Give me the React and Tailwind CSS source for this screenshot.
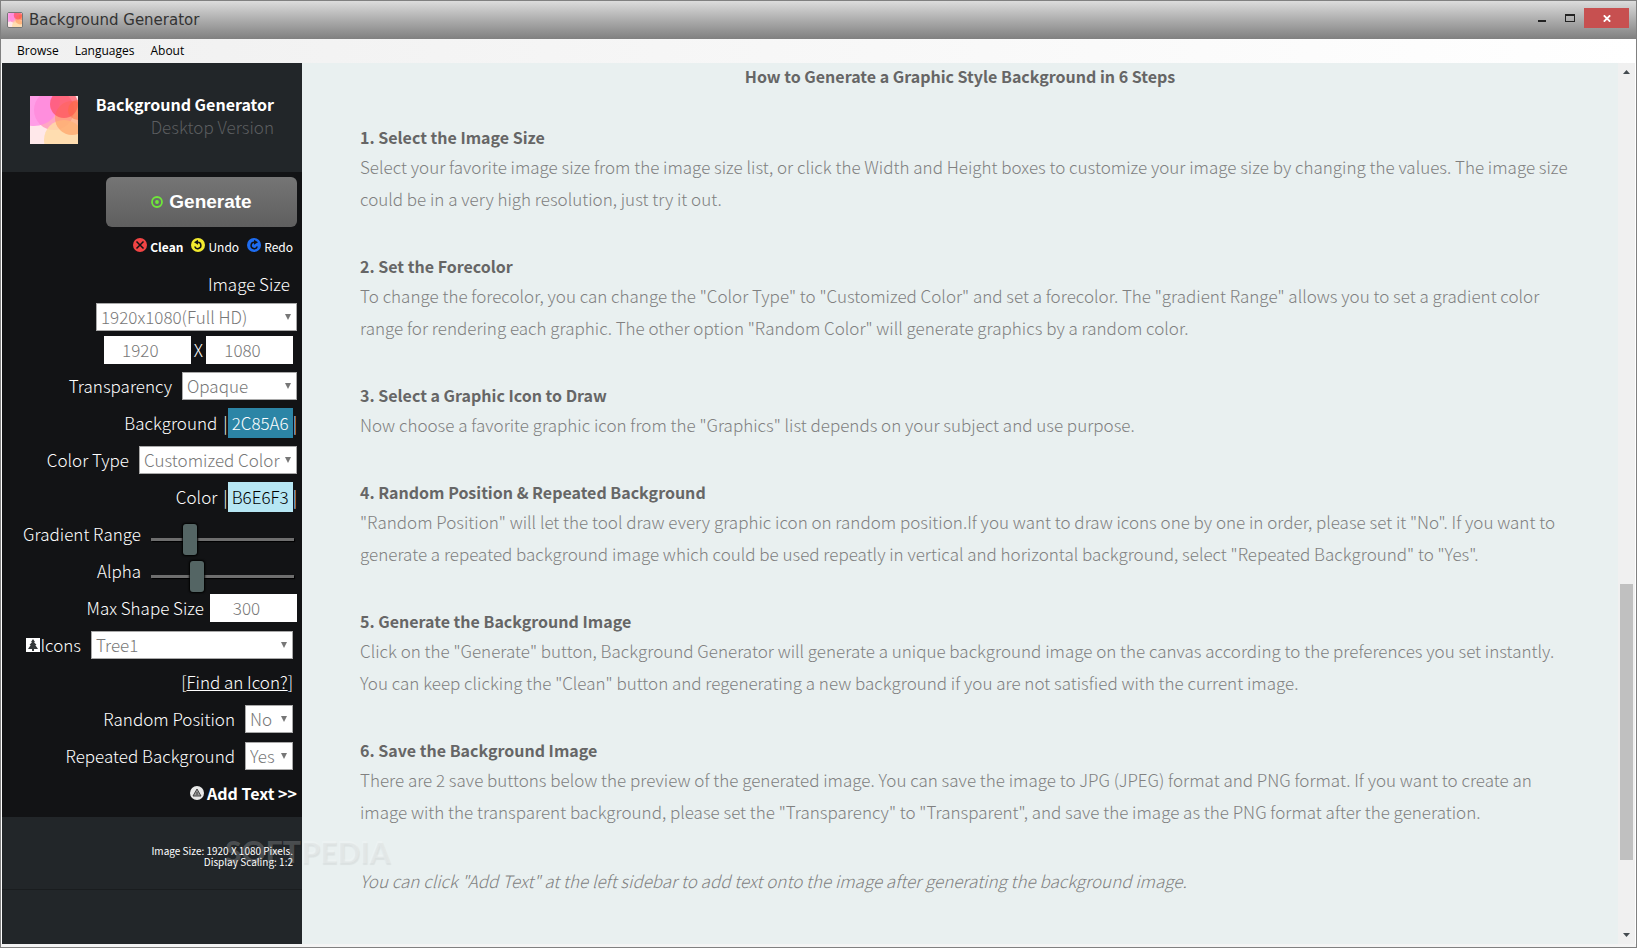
const SOURCE = "font-['Noto_Sans_CJK_SC','Source_Sans_Pro',sans-serif]";

const steps = [
  {
    title: "1. Select the Image Size",
    text: "Select your favorite image size from the image size list, or click the Width and Height boxes to customize your image size by changing the values. The image size could be in a very high resolution, just try it out.",
  },
  {
    title: "2. Set the Forecolor",
    text: 'To change the forecolor, you can change the "Color Type" to "Customized Color" and set a forecolor. The "gradient Range" allows you to set a gradient color range for rendering each graphic. The other option "Random Color" will generate graphics by a random color.',
  },
  {
    title: "3. Select a Graphic Icon to Draw",
    text: 'Now choose a favorite graphic icon from the "Graphics" list depends on your subject and use purpose.',
  },
  {
    title: "4. Random Position & Repeated Background",
    text: '"Random Position" will let the tool draw every graphic icon on random position.If you want to draw icons one by one in order, please set it "No". If you want to generate a repeated background image which could be used repeatly in vertical and horizontal background, select "Repeated Background" to "Yes".',
  },
  {
    title: "5. Generate the Background Image",
    text: 'Click on the "Generate" button, Background Generator will generate a unique background image on the canvas according to the preferences you set instantly. You can keep clicking the "Clean" button and regenerating a new background if you are not satisfied with the current image.',
  },
  {
    title: "6. Save the Background Image",
    text: 'There are 2 save buttons below the preview of the generated image. You can save the image to JPG (JPEG) format and PNG format. If you want to create an image with the transparent background, please set the "Transparency" to "Transparent", and save the image as the PNG format after the generation.',
  },
];

function Logo({ className }) {
  return (
    <svg viewBox="0 0 48 48" className={className} aria-hidden="true">
      <rect width="48" height="48" fill="#ffe8ea" />
      <circle cx="24" cy="14" r="20" fill="#ff7aa8" fillOpacity=".6" />
      <circle cx="4" cy="4" r="26" fill="#ff86e6" fillOpacity=".75" />
      <circle cx="34" cy="44" r="20" fill="#ffdba6" fillOpacity=".85" />
      <circle cx="42" cy="22" r="17" fill="#ff9a5c" fillOpacity=".6" />
      <circle cx="34" cy="8" r="14" fill="#ff4f5e" fillOpacity=".7" />
      <circle cx="48" cy="14" r="10" fill="#ff6a3c" fillOpacity=".5" />
    </svg>
  );
}

function TitleBar() {
  return (
    <header className="flex h-[38px] items-center bg-linear-to-b from-[#dcdcdc] to-[#808080] pr-[7px] pl-[6px]">
      <Logo className="size-4 rounded-xs border border-[#777]" />
      <h1 className="ml-[6px] flex-1 font-['DejaVu_Sans',sans-serif] text-[15px] text-[#333]">Background Generator</h1>
      <div className="mb-1 flex">
        <button aria-label="Minimize" className="flex h-5 w-7 items-center justify-center">
          <svg viewBox="0 0 8 8" className="size-2" aria-hidden="true"><path d="M0 6h8v2H0z" fill="#222" /></svg>
        </button>
        <button aria-label="Maximize" className="flex h-5 w-7 items-center justify-center">
          <svg viewBox="0 0 10 8" className="h-2 w-[10px]" aria-hidden="true"><path d="M0 0h10v8H0zM1 2v5h8V2z" fill="#222" fillRule="evenodd" /></svg>
        </button>
        <button aria-label="Close" className="flex h-5 w-[45px] items-center justify-center bg-[#c75050]">
          <svg viewBox="0 0 8 7" className="h-[7px] w-2" aria-hidden="true"><path d="M.8.3l6.4 6.4M7.2.3L.8 6.7" stroke="#fff" strokeWidth="1.8" /></svg>
        </button>
      </div>
    </header>
  );
}

function MenuBar() {
  return (
    <nav className="flex h-6 items-center gap-4 bg-linear-to-r from-[#f0f0f0] to-white pl-4 font-['Open_Sans',sans-serif] text-xs text-black">
      <button>Browse</button>
      <button>Languages</button>
      <button>About</button>
    </nav>
  );
}

function Select({ id, value, className }) {
  return (
    <span className={"relative flex h-7 " + className}>
      <select id={id} defaultValue={value} className="w-full appearance-none border border-[#a9a9a9] bg-white pl-1 text-[17px] leading-6 font-light text-[#777]">
        <option>{value}</option>
      </select>
      <svg viewBox="0 0 6 6" className="pointer-events-none absolute top-[11px] right-[6px] size-[6px]" aria-hidden="true">
        <path d="M0 0h6L3 6z" fill="#777" />
      </svg>
    </span>
  );
}

function Row({ label, id, children, className = "gap-[10px] pr-[5px]" }) {
  return (
    <div className={"flex h-[37px] items-center justify-end " + className}>
      <label htmlFor={id}>{label}</label>
      {children}
    </div>
  );
}

function NumberBox({ id, value, label }) {
  return (
    <input id={id} aria-label={label} defaultValue={value} className="h-7 w-[87px] bg-white pr-[14px] text-center text-[17px] leading-7 font-light text-[#777]" />
  );
}

function ColorBox({ id, value, className }) {
  return (
    <span className="flex items-center">
      |<input id={id} defaultValue={value} className={"h-[30px] w-[65px] text-center text-[17px] font-light " + className} />|
    </span>
  );
}

function Slider({ id, value }) {
  return (
    <input
      id={id}
      type="range"
      defaultValue={value}
      className="mt-3 h-[31px] w-[143px] appearance-none bg-transparent [&::-webkit-slider-runnable-track]:h-[3px] [&::-webkit-slider-runnable-track]:bg-[#6e6e6e] [&::-webkit-slider-runnable-track]:shadow-[1px_1px_1px_#000] [&::-webkit-slider-thumb]:-mt-[14px] [&::-webkit-slider-thumb]:h-[31px] [&::-webkit-slider-thumb]:w-[14px] [&::-webkit-slider-thumb]:appearance-none [&::-webkit-slider-thumb]:rounded-[3px] [&::-webkit-slider-thumb]:bg-[#546564] [&::-webkit-slider-thumb]:shadow-[0_0_2px_1px_#000]"
    />
  );
}

function RoundIcon({ color, children }) {
  return (
    <svg viewBox="0 0 14 14" className="mb-1 size-[14px]" fill="none" stroke="#111214" strokeWidth="1.5" aria-hidden="true">
      <circle cx="7" cy="7" r="7" fill={color} stroke="none" />
      {children}
    </svg>
  );
}

function Sidebar() {
  return (
    <aside className="flex w-[300px] shrink-0 flex-col bg-[#222629] text-[17px] leading-6 font-light text-white">
      <div className="flex h-[109px] items-start justify-between px-7 pt-[29px]">
        <Logo className="mt-1 size-12" />
        <div className="text-right">
          <p className="text-base leading-6 font-bold">Background Generator</p>
          <p className="leading-[22px] text-[#5c5e60]">Desktop Version</p>
        </div>
      </div>

      <div className="bg-[#121315] pt-[5px] pb-[6px]">
        <div className="flex justify-end pr-[5px]">
          <button className="flex h-[50px] w-[191px] items-center justify-center gap-[6px] rounded-md bg-linear-to-b from-[#757575] to-[#5f5f5f] font-['Liberation_Sans',sans-serif] text-[19px] font-bold">
            <svg viewBox="0 0 12 12" className="size-3" fill="none" stroke="#6fe83a" aria-hidden="true">
              <circle cx="6" cy="6" r="5" strokeWidth="1.8" />
              <circle cx="6" cy="6" r="1.9" fill="#6fe83a" stroke="none" />
            </svg>
            Generate
          </button>
        </div>
        <div className="flex h-10 items-center justify-end gap-2 pr-[9px] text-xs font-normal">
          <button className="flex items-center gap-[3px] font-bold">
            <RoundIcon color="#f24444"><path d="M3.500 3.500l7 7M10.500 3.500l-7 7" /></RoundIcon>
            Clean
          </button>
          <button className="flex items-center gap-[3px]">
            <RoundIcon color="#f2ea2e">
              <path d="M6.500 4.200a3.200 3.200 0 1 1-2.800 4.300" />
              <path d="M3 4.200L7 1.700v5z" fill="#111214" stroke="none" />
            </RoundIcon>
            Undo
          </button>
          <button className="flex items-center gap-[3px]">
            <RoundIcon color="#1e6cf0">
              <path d="M7.500 4.200a3.200 3.200 0 1 0 2.800 4.300" />
              <path d="M11 4.200L7 1.700v5z" fill="#111214" stroke="none" />
            </RoundIcon>
            Redo
          </button>
        </div>

        <div className="flex flex-col items-end pr-[5px]">
          <label htmlFor="preset" className="flex h-9 items-center pr-[7px] pb-[2px]">Image Size</label>
          <Select id="preset" value="1920x1080(Full HD)" className="w-[201px]" />
          <div className="mt-[5px] mb-[3px] flex items-center gap-[3px] pr-1">
            <NumberBox id="width" label="Width" value="1920" />
            X
            <NumberBox id="height" label="Height" value="1080" />
          </div>
        </div>

        <Row label="Transparency" id="transparency">
          <Select id="transparency" value="Opaque" className="w-[115px]" />
        </Row>
        <Row label="Background" id="background" className="gap-[6px] pr-[5px]">
          <ColorBox id="background" value="2C85A6" className="bg-[#2c85a6] text-white" />
        </Row>
        <Row label="Color Type" id="colorType">
          <Select id="colorType" value="Customized Color" className="w-[158px]" />
        </Row>
        <Row label="Color" id="color" className="gap-[6px] pr-[5px]">
          <ColorBox id="color" value="B6E6F3" className="bg-[#b6e6f3] text-black" />
        </Row>
        <Row label="Gradient Range" id="gradient" className="gap-[10px] pr-2">
          <Slider id="gradient" value="25" />
        </Row>
        <Row label="Alpha" id="alpha" className="gap-[10px] pr-2">
          <Slider id="alpha" value="30" />
        </Row>
        <Row label="Max Shape Size" id="shapeSize" className="gap-[6px] pr-[5px]">
          <NumberBox id="shapeSize" value="300" />
        </Row>
        <Row
          id="icons"
          className="gap-[10px] pr-[9px]"
          label={
            <span className="flex items-center">
              <svg viewBox="0 0 14 14" className="size-[14px]" aria-hidden="true">
                <path d="M0 0h14v14H0z" fill="#fff" />
                <path d="M7 1l2 3H8l2.500 3H9.300l2.700 4H8v2H6v-2H2l2.700-4H3.500L6 4H5z" fill="#34383a" />
              </svg>
              Icons
            </span>
          }
        >
          <Select id="icons" value="Tree1" className="w-[202px]" />
        </Row>
        <div className="flex h-[37px] items-center justify-end pr-[9px]">
          [<a href="#find-icon" className="underline">Find an Icon?</a>]
        </div>
        <Row label="Random Position" id="randomPosition" className="gap-[10px] pr-[9px]">
          <Select id="randomPosition" value="No" className="w-12" />
        </Row>
        <Row label="Repeated Background" id="repeated" className="gap-[10px] pr-[9px]">
          <Select id="repeated" value="Yes" className="w-12" />
        </Row>
        <div className="flex h-[37px] items-center justify-end pr-[5px]">
          <button className="flex items-center gap-[3px] text-base font-bold">
            <svg viewBox="0 0 14 14" className="size-[14px]" aria-hidden="true">
              <circle cx="7" cy="7" r="7" fill="#e8e8e8" />
              <path d="M7 3l4 7H3zM7 6v3" fill="#999" stroke="#444" />
            </svg>
            Add Text &gt;&gt;
          </button>
        </div>
      </div>

      <div className="h-[73px] border-b border-[#1a1d1f] pt-7 pr-[9px] text-right text-[10px] leading-[11px] font-normal">
        <p>Image Size: 1920 X 1080 Pixels.</p>
        <p>Display Scaling: 1:2</p>
      </div>
    </aside>
  );
}

function Guide() {
  return (
    <main className="flex-1 bg-[#e9f0f0] px-10 text-[17px] font-light text-[#808080]">
      <h2 className="mb-[34px] text-center text-base leading-[26px] font-bold text-[#666]">How to Generate a Graphic Style Background in 6 Steps</h2>
      {steps.map((step) => (
        <section key={step.title} className="mb-[37px] pl-[18px]">
          <h3 className="text-base leading-7 font-bold text-[#666]">{step.title}</h3>
          <p className="leading-8">{step.text}</p>
        </section>
      ))}
      <p className="pl-[18px] leading-8 italic">
        You can click "Add Text" at the left sidebar to add text onto the image after generating the background image.
      </p>
    </main>
  );
}

function ScrollBar() {
  return (
    <div className="flex w-[17px] shrink-0 flex-col items-center bg-[#f0f0f0]" aria-hidden="true">
      <svg viewBox="0 0 17 17" className="size-[17px]"><path d="M5 11h7L8.500 7z" fill="#444b50" /></svg>
      <div className="grow-[504]" />
      <div className="w-[13px] grow-[276] bg-[#c0c0c0]" />
      <div className="grow-[67]" />
      <svg viewBox="0 0 17 17" className="size-[17px]"><path d="M5 6h7l-3.500 4z" fill="#444b50" /></svg>
    </div>
  );
}

export default function App() {
  return (
    <div className={"relative flex min-h-screen flex-col border border-[#808080] bg-[#f4f4f4] pb-[3px] " + SOURCE}>
      <TitleBar />
      <MenuBar />
      <div className="flex flex-1 border-x border-white">
        <Sidebar />
        <Guide />
        <ScrollBar />
      </div>
      <div className="pointer-events-none absolute bottom-20 left-[224px] font-['Lato',sans-serif] text-[30px] leading-8 font-black text-white/20 text-shadow-[1px_2px_1px_rgb(0_0_0/0.06)]">
        SOFTPEDIA
      </div>
    </div>
  );
}
